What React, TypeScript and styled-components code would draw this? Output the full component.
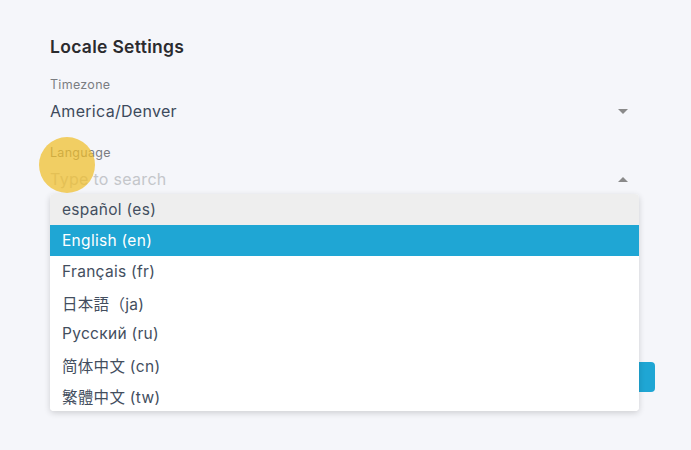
import React from 'react';
import styled, { createGlobalStyle } from 'styled-components';

const GlobalStyle = createGlobalStyle`
  html, body {
    margin: 0;
    padding: 0;
    background: #f5f6fa;
  }
  body {
    font-family: Inter, "Noto Sans", "Noto Sans CJK JP", sans-serif;
  }
`;

const StyledPage = styled.div`
  position: relative;
  width: 691px;
  height: 450px;
  overflow: hidden;
  background: #f5f6fa;
  box-sizing: border-box;
  padding: 36px 0 0 50px;
`;

const StyledSection = styled.section`
  display: flex;
  flex-direction: column;
  width: 605px;
`;

const StyledTitle = styled.h2`
  margin: 0;
  font-size: 17.5px;
  line-height: 22px;
  font-weight: 600;
  letter-spacing: 0.3px;
  color: #2b2b2e;
`;

const StyledField = styled.div<{ $top: number }>`
  position: relative;
  display: flex;
  flex-direction: column;
  width: 589px;
  margin-top: ${(p) => p.$top}px;
`;

const StyledLabel = styled.label`
  font-size: 12.5px;
  line-height: 16px;
  letter-spacing: 0.3px;
  color: #7b7d82;
`;

const StyledSelect = styled.div`
  display: flex;
  align-items: center;
  justify-content: space-between;
  height: 22px;
  margin-top: 7px;
  padding-right: 11px;
`;

const StyledValue = styled.span<{ $placeholder?: boolean }>`
  font-size: 16px;
  letter-spacing: 0.3px;
  color: ${(p) => (p.$placeholder ? '#c4c6ca' : '#3d4a5c')};
`;

const StyledCaret = styled.span<{ $up?: boolean }>`
  width: 0;
  height: 0;
  border-left: 5px solid transparent;
  border-right: 5px solid transparent;
  ${(p) => (p.$up ? 'border-bottom: 5px solid #8a8a8a;' : 'border-top: 5px solid #8a8a8a;')}
`;

const StyledMenu = styled.ul`
  position: absolute;
  top: 49px;
  left: 0;
  width: 589px;
  margin: 0;
  padding: 0;
  list-style: none;
  background: #ffffff;
  border-radius: 4px;
  box-shadow: 0 2px 6px rgba(0, 0, 0, 0.16);
  overflow: hidden;
  z-index: 2;
`;

const StyledOption = styled.li<{ $state?: 'hover' | 'selected' }>`
  display: flex;
  align-items: center;
  height: 31px;
  padding-left: 12px;
  font-size: 15.5px;
  letter-spacing: 0.3px;
  color: ${(p) => (p.$state === 'selected' ? '#ffffff' : '#434e5e')};
  background: ${(p) =>
    p.$state === 'selected' ? '#1fa6d4' : p.$state === 'hover' ? '#eeeeee' : '#ffffff'};
  font-family: Inter, "Noto Sans CJK JP", sans-serif;
`;

const StyledActions = styled.div`
  display: flex;
  justify-content: flex-end;
  margin-top: 172px;
`;

const StyledButton = styled.button`
  width: 90px;
  height: 30px;
  border: none;
  border-radius: 4px;
  background: #1fa6d4;
  color: #ffffff;
  font-size: 14px;
`;

const StyledCursor = styled.div`
  position: absolute;
  left: 39px;
  top: 137px;
  width: 56px;
  height: 56px;
  border-radius: 50%;
  background: rgba(240, 190, 40, 0.72);
  pointer-events: none;
  z-index: 3;
`;

const languages = [
  { label: 'español (es)', state: 'hover' as const },
  { label: 'English (en)', state: 'selected' as const },
  { label: 'Français (fr)' },
  { label: '日本語（ja)' },
  { label: 'Русский (ru)' },
  { label: '简体中文 (cn)' },
  { label: '繁體中文 (tw)' },
];

const App: React.FunctionComponent = () => (
  <>
    <GlobalStyle />
    <StyledPage>
      <StyledSection>
        <StyledTitle>Locale Settings</StyledTitle>
        <StyledField $top={19}>
          <StyledLabel>Timezone</StyledLabel>
          <StyledSelect>
            <StyledValue>America/Denver</StyledValue>
            <StyledCaret />
          </StyledSelect>
        </StyledField>
        <StyledField $top={23}>
          <StyledLabel>Language</StyledLabel>
          <StyledSelect>
            <StyledValue $placeholder>Type to search</StyledValue>
            <StyledCaret $up />
          </StyledSelect>
          <StyledMenu>
            {languages.map((lang) => (
              <StyledOption key={lang.label} $state={lang.state}>
                {lang.label}
              </StyledOption>
            ))}
          </StyledMenu>
        </StyledField>
        <StyledActions>
          <StyledButton>Save</StyledButton>
        </StyledActions>
      </StyledSection>
      <StyledCursor />
    </StyledPage>
  </>
);

export default App;
